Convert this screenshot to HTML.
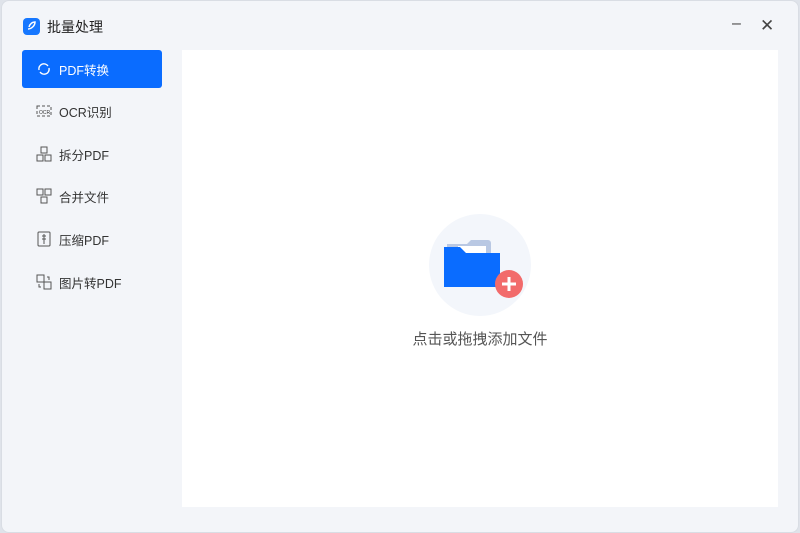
<!DOCTYPE html>
<html><head><meta charset="utf-8"><style>
*{margin:0;padding:0;box-sizing:border-box}
body{width:800px;height:533px;background:#dfe3ea;font-family:"Liberation Sans","Noto Sans CJK SC",sans-serif;overflow:hidden;position:relative}
.win{position:absolute;left:1px;top:0px;width:798px;height:533px;background:#f3f5f9;border-radius:8px;border:1px solid #d9dde4}
.title{position:absolute;left:45px;top:16px;font-size:14px;color:#222}
.logo{position:absolute;left:21px;top:17px;width:17px;height:17px;border-radius:4px;background:#1677ff}
.item{position:absolute;left:20px;width:140px;height:38px;font-size:12.5px;color:#333;display:flex;align-items:center;padding-left:14px}
.item svg{margin-right:7px}
.act{background:#0a6cff;color:#fff;border-radius:3px}
.panel{position:absolute;left:180px;top:49px;width:596px;height:457px;background:#fff}
.ctl{position:absolute;font-size:16px;color:#444}
</style></head><body>
<div class="win">
<div class="logo"><svg width="17" height="17"><path d="M5 11c3 0 7-3 7-7-3 0-5 2-6 5" stroke="#fff" stroke-width="1.5" fill="none"/></svg></div>
<div class="title">批量处理</div>
<div class="ctl" style="left:730px;top:14px">–</div>
<div class="ctl" style="left:758px;top:15px;font-size:17px">✕</div>
<div class="item act" style="top:49px"><svg width="16" height="16"><path d="M3 9a5 5 0 0 1 9-4M13 7a5 5 0 0 1-9 4" stroke="#fff" stroke-width="1.4" fill="none"/></svg>PDF转换</div>
<div class="item" style="top:91px"><svg width="16" height="16"><rect x="1" y="3" width="14" height="10" fill="none" stroke="#555" stroke-dasharray="3 2"/><text x="3" y="11" font-size="5" fill="#333">OCR</text></svg>OCR识别</div>
<div class="item" style="top:134px"><svg width="16" height="16" fill="none" stroke="#555"><rect x="5" y="1" width="6" height="6"/><rect x="1" y="9" width="6" height="6"/><rect x="9" y="9" width="6" height="6"/></svg>拆分PDF</div>
<div class="item" style="top:176px"><svg width="16" height="16" fill="none" stroke="#555"><rect x="1" y="1" width="6" height="6"/><rect x="9" y="1" width="6" height="6"/><rect x="5" y="9" width="6" height="6"/></svg>合并文件</div>
<div class="item" style="top:219px"><svg width="16" height="16" fill="none" stroke="#555"><rect x="2" y="1" width="12" height="14" rx="1"/><path d="M8 3v10M6 5h4M6 8h4"/></svg>压缩PDF</div>
<div class="item" style="top:262px"><svg width="16" height="16" fill="none" stroke="#555"><rect x="1" y="1" width="7" height="7"/><rect x="8" y="8" width="7" height="7"/><path d="M11 3h2v3M3 10v3h2"/></svg>图片转PDF</div>
<div class="panel">
<svg style="position:absolute;left:246px;top:164px" width="104" height="104">
<circle cx="52" cy="51" r="51" fill="#f3f6fb"/>
<path d="M19 30h20l4 -4h17a3 3 0 0 1 3 3v44h-44z" fill="#b9c8e3"/>
<path d="M30 32h28v30h-28z" fill="#fff"/>
<path d="M16 33h16l6 6h34v34h-56z" fill="#0a6cff"/>
<circle cx="81" cy="70" r="14" fill="#f26b6b"/>
<path d="M81 63v14M74 70h14" stroke="#fff" stroke-width="3"/>
</svg>
<div style="position:absolute;left:0;width:596px;top:278px;text-align:center;font-size:15px;color:#555">点击或拖拽添加文件</div>
</div>
</div>
</body></html>
